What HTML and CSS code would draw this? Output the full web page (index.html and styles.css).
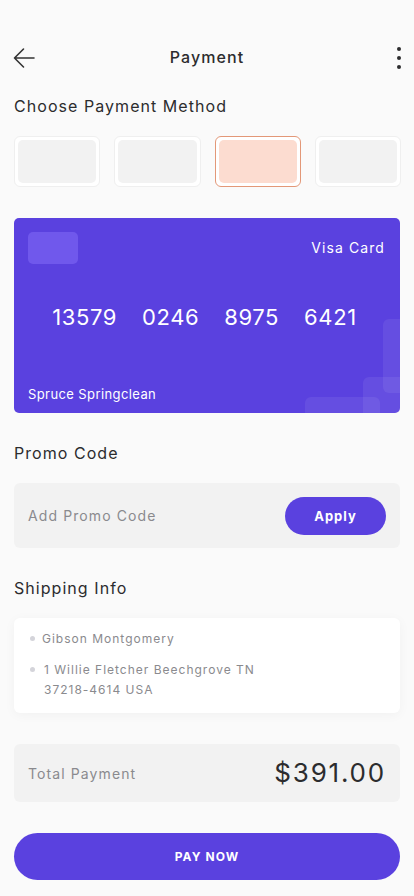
FILE: index.html
```html
<!DOCTYPE html>
<html lang="en">
<head>
<meta charset="utf-8">
<meta name="viewport" content="width=device-width, initial-scale=1">
<title>Payment</title>
<link rel="stylesheet" href="styles.css">
</head>
<body>
<div class="page">
  <header class="topbar">
    <button class="icon-btn back" aria-label="Back">
      <svg width="24" height="24" viewBox="0 0 24 24" fill="none" stroke="#333" stroke-width="1.6" stroke-linecap="round" stroke-linejoin="round"><path d="M22 12H2.5M11.5 3L2.5 12L11.5 21"/></svg>
    </button>
    <h1 class="title">Payment</h1>
    <button class="icon-btn more" aria-label="More">
      <span class="dot"></span><span class="dot"></span><span class="dot"></span>
    </button>
  </header>

  <h2 class="section-title first">Choose Payment Method</h2>
  <div class="methods">
    <div class="method"><div class="method-inner"></div></div>
    <div class="method"><div class="method-inner"></div></div>
    <div class="method selected"><div class="method-inner"></div></div>
    <div class="method"><div class="method-inner"></div></div>
  </div>

  <div class="card">
    <div class="card-top">
      <div class="chip"></div>
      <div class="card-type">Visa Card</div>
    </div>
    <div class="card-number">
      <span>13579</span><span>0246</span><span>8975</span><span>6421</span>
    </div>
    <div class="card-name">Spruce Springclean</div>
    <span class="deco deco-a"></span>
    <span class="deco deco-b"></span>
    <span class="deco deco-c"></span>
  </div>

  <h2 class="section-title">Promo Code</h2>
  <div class="promo">
    <span class="promo-placeholder">Add Promo Code</span>
    <button class="apply">Apply</button>
  </div>

  <h2 class="section-title">Shipping Info</h2>
  <div class="shipping">
    <div class="ship-row"><span class="bullet"></span><span class="ship-text">Gibson Montgomery</span></div>
    <div class="ship-row"><span class="bullet"></span><span class="ship-text">1 Willie Fletcher Beechgrove TN<br>37218-4614 USA</span></div>
  </div>

  <div class="total">
    <span class="total-label">Total Payment</span>
    <span class="total-amount">$391.00</span>
  </div>

  <button class="pay">PAY NOW</button>
</div>
</body>
</html>
```

FILE: styles.css
```css
* { box-sizing: border-box; }
html, body {
  margin: 0;
  padding: 0;
  background: #fafafa;
}
body {
  font-family: Inter, "Noto Sans", "Liberation Sans", sans-serif;
  color: #2c2c2e;
}
.page {
  width: 414px;
  padding: 38px 14px 0;
}
.topbar {
  height: 40px;
  display: flex;
  align-items: center;
  justify-content: space-between;
}
.icon-btn {
  background: none;
  border: 0;
  padding: 0;
  width: 28px;
  height: 40px;
  display: flex;
  align-items: center;
  cursor: pointer;
}
.back { justify-content: flex-start; margin-left: -2px; }
.more {
  flex-direction: column;
  justify-content: center;
  align-items: flex-end;
  gap: 5px;
  margin-right: -2px;
  padding-right: 1px;
}
.dot {
  width: 4px;
  height: 4px;
  border-radius: 50%;
  background: #2c2c2e;
}
.title {
  margin: 0;
  font-size: 16px;
  font-weight: 500;
  letter-spacing: 1.1px;
  line-height: 20px;
  margin-top: -2px;
}
.section-title {
  margin: 30px 0 20px;
  font-size: 16px;
  font-weight: 400;
  line-height: 20px;
  letter-spacing: 1.05px;
  color: #2c2c2e;
}
.section-title.first { margin-top: 18px; }

.methods {
  display: grid;
  grid-template-columns: repeat(4, 1fr);
  gap: 14px;
  margin-right: -1px;
}
.method {
  height: 51px;
  border: 1px solid #efefef;
  border-radius: 6px;
  background: #fff;
  padding: 3px;
}
.method-inner {
  height: 100%;
  border-radius: 5px;
  background: #f2f2f2;
}
.method.selected { border-color: #e39878; }
.method.selected .method-inner { background: #fcdcd0; }

.card {
  position: relative;
  overflow: hidden;
  margin-top: 31px;
  height: 195px;
  border-radius: 5px;
  background: #5a41df;
  color: #fff;
  padding: 14px 15px 10px 14px;
  display: flex;
  flex-direction: column;
}
.card-top {
  display: flex;
  justify-content: space-between;
  align-items: flex-start;
}
.chip {
  width: 50px;
  height: 32px;
  border-radius: 5px;
  background: #7058ec;
}
.card-type {
  font-size: 14px;
  letter-spacing: 1.1px;
  line-height: 20px;
  margin-top: 6px;
}
.card-number {
  display: flex;
  justify-content: center;
  gap: 25px;
  font-size: 22px;
  letter-spacing: 0.6px;
  line-height: 28px;
  margin-top: 39px;
  padding-right: 4px;
}
.card-name {
  margin-top: auto;
  font-size: 13px;
  letter-spacing: 0.4px;
  line-height: 18px;
}
.deco {
  position: absolute;
  border-radius: 6px;
  background: rgba(255, 255, 255, 0.07);
}
.deco-a { left: 369px; top: 101px; width: 40px; height: 74px; }
.deco-b { left: 349px; top: 159px; width: 60px; height: 60px; }
.deco-c { left: 291px; top: 179px; width: 75px; height: 40px; }

.promo {
  height: 65px;
  border-radius: 6px;
  background: #f2f2f2;
  display: flex;
  align-items: center;
  justify-content: space-between;
  padding: 0 14px;
}
.promo-placeholder {
  font-size: 14px;
  color: #8a8a8e;
  letter-spacing: 1.1px;
}
.apply {
  width: 101px;
  height: 38px;
  border: 0;
  border-radius: 19px;
  background: #5a41df;
  color: #fff;
  font-family: inherit;
  font-size: 13px;
  font-weight: 700;
  letter-spacing: 1px;
}

.shipping {
  background: #fff;
  border-radius: 6px;
  box-shadow: 0 2px 12px rgba(0, 0, 0, 0.04);
  padding: 11px 16px 12px 16px;
  height: 95px;
  display: flex;
  flex-direction: column;
  gap: 11px;
}
.ship-row {
  display: flex;
  align-items: flex-start;
  gap: 7px;
}
.bullet {
  flex: none;
  width: 5px;
  height: 5px;
  border-radius: 50%;
  background: #d4d4da;
  margin-top: 7px;
}
.ship-text {
  font-size: 12px;
  line-height: 20px;
  color: #8a8a8e;
  letter-spacing: 1px;
}
.ship-row + .ship-row .ship-text { margin-left: 2px; }

.total {
  margin-top: 31px;
  height: 58px;
  border-radius: 6px;
  background: #f2f2f2;
  display: flex;
  align-items: center;
  justify-content: space-between;
  padding: 0 15px 0 14px;
}
.total-label {
  font-size: 14px;
  color: #8a8a8e;
  letter-spacing: 1.1px;
}
.total-amount {
  font-size: 26px;
  color: #2c2c2e;
  letter-spacing: 1.8px;
  margin-top: -2px;
  margin-right: -1px;
}

.pay {
  display: block;
  width: 100%;
  margin-top: 31px;
  height: 47px;
  border: 0;
  border-radius: 24px;
  background: #5a41df;
  color: #fff;
  font-family: inherit;
  font-size: 12px;
  font-weight: 700;
  letter-spacing: 1.1px;
}
```
